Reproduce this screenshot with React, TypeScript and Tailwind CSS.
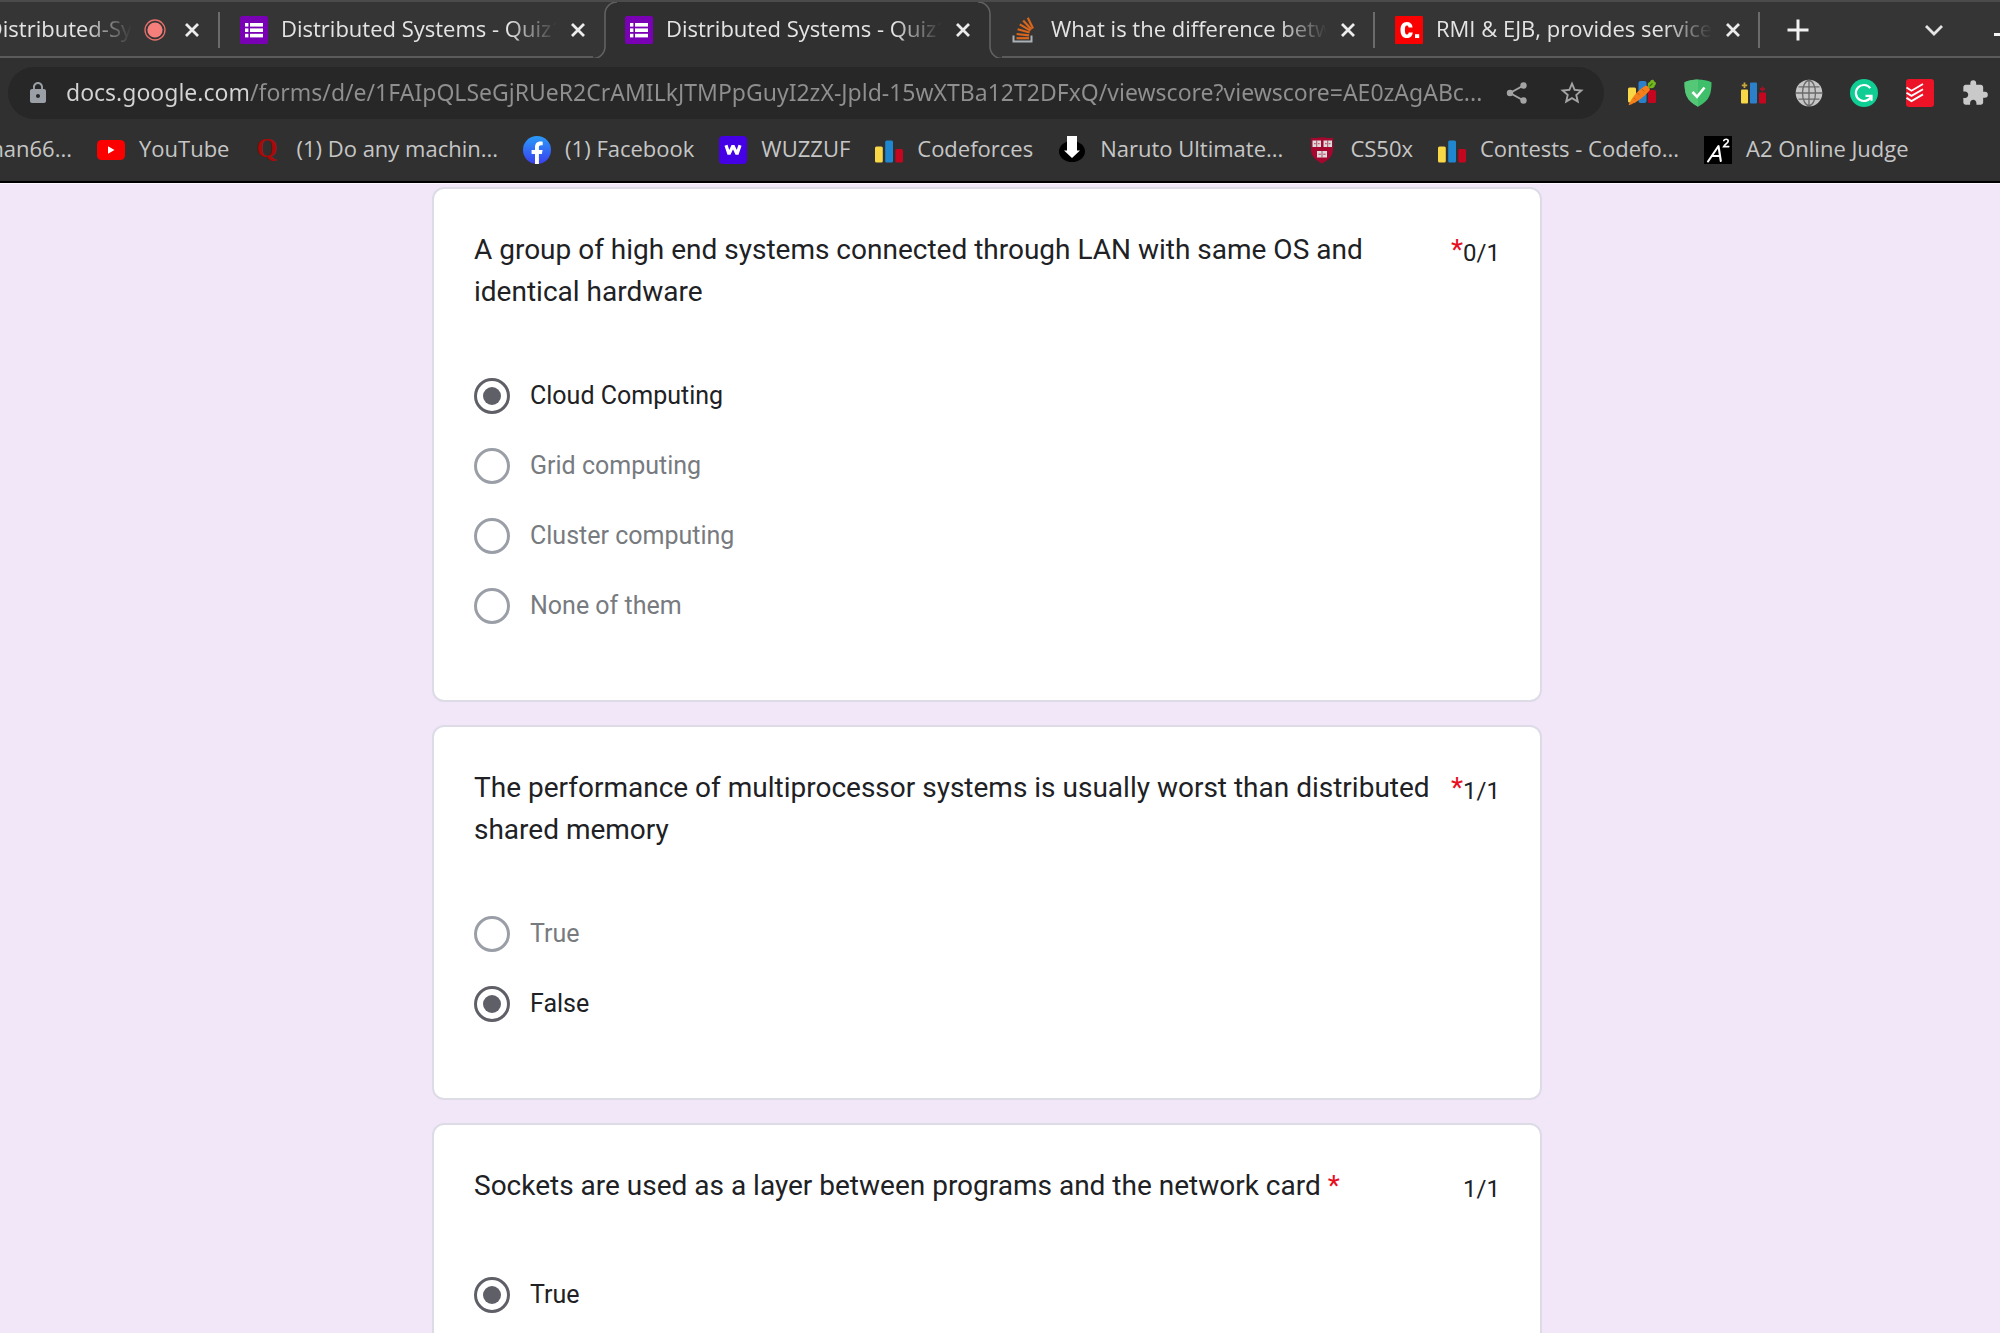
import type { ReactNode } from "react";
import { MdExtension, MdLock, MdStarBorder } from "react-icons/md";

/* ---------- icons ---------- */

const FormsIcon = () => (
  <svg viewBox="0 0 28 28" className="size-7 shrink-0" aria-hidden="true">
    <rect width="28" height="28" rx="2" fill="#7900b4" />
    <g fill="#fff">
      <rect x="5" y="7" width="3.4" height="3.6" />
      <rect x="10" y="7" width="13" height="3.6" />
      <rect x="5" y="12.4" width="3.4" height="3.6" />
      <rect x="10" y="12.4" width="13" height="3.6" />
      <rect x="5" y="17.8" width="3.4" height="3.6" />
      <rect x="10" y="17.8" width="13" height="3.6" />
    </g>
  </svg>
);

const StackIcon = () => (
  <svg viewBox="0 0 28 28" className="size-7 shrink-0" aria-hidden="true" fill="none">
    <path d="M3.5 19.5v6h18v-6" stroke="#a9b1b6" strokeWidth="2" />
    <g stroke="#d9661c" strokeWidth="2.2">
      <path d="M6.5 22.2h12.5" />
      <path d="M6.6 18l12.4 1.3" />
      <path d="M7.6 13.2l12 3.3" />
      <path d="M9.8 8.4l10.7 6.2" />
      <path d="M13.2 4.6l8.3 9" />
      <path d="M17.8 1.8l5.2 10.6" />
    </g>
  </svg>
);

const CourseIcon = () => (
  <svg viewBox="0 0 28 28" className="size-7 shrink-0" aria-hidden="true">
    <rect width="28" height="28" rx="1" fill="#fb0000" />
    <path d="M17.6 11.4h-4c-.2-1.4-.8-2-1.7-2-1.4 0-2 1.2-2 4.5s.6 4.6 2 4.6c1 0 1.6-.7 1.8-2.1h4c-.3 3.6-2.5 5.6-5.9 5.6-4.1 0-6.3-2.9-6.3-8.1s2.3-8 6.3-8c3.4 0 5.5 1.9 5.8 5.5z" fill="#fff" />
    <rect x="20" y="18.2" width="4.2" height="3.8" fill="#fff" />
  </svg>
);

const RecordingIcon = () => (
  <svg viewBox="0 0 22 22" className="size-[22px] shrink-0" role="img" aria-label="Recording">
    <circle cx="11" cy="11" r="10" fill="none" stroke="#e8706c" strokeWidth="1.3" />
    <circle cx="11" cy="11" r="7.6" fill="#f67f7b" />
  </svg>
);

const YouTubeIcon = () => (
  <svg viewBox="0 0 28 28" className="size-7 shrink-0" aria-hidden="true">
    <rect y="4" width="28" height="20" rx="4.5" fill="#fc0000" />
    <path d="M11 10.3v7.4l6.5-3.700z" fill="#fff" />
  </svg>
);

const QuoraIcon = () => (
  <svg viewBox="0 0 28 28" className="size-7 shrink-0" aria-hidden="true">
    <text x="13" y="21" textAnchor="middle" fontFamily="Liberation Serif, serif" fontWeight="700" fontSize="27" fill="#a80a0a">
      Q
    </text>
  </svg>
);

const FacebookIcon = () => (
  <svg viewBox="0 0 28 28" className="size-7 shrink-0" aria-hidden="true">
    <defs>
      <linearGradient id="fb" x1="0" y1="0" x2="0" y2="1">
        <stop offset="0" stopColor="#2a9bf8" />
        <stop offset="1" stopColor="#3a3ff0" />
      </linearGradient>
    </defs>
    <circle cx="14" cy="14" r="14" fill="url(#fb)" />
    <path d="M12 27.9V18H8.6v-4H12v-2.5c0-4 2-6 5.4-6 .9 0 1.7.1 2.3.2v3.5h-1.5c-1.8 0-2.3.8-2.3 2.2V14h3.7l-.7 4h-3v9.9a14 14 0 0 1-3.9 0z" fill="#fff" />
  </svg>
);

const WuzzufIcon = () => (
  <svg viewBox="0 0 28 28" className="size-7 shrink-0" aria-hidden="true">
    <rect width="28" height="28" rx="4" fill="#4500e5" />
    <path d="M7 9.2l3 9 4-8.6 4 8.6 3-9" fill="none" stroke="#fff" strokeWidth="3.2" strokeLinejoin="bevel" />
  </svg>
);

const CodeforcesIcon = () => (
  <svg viewBox="0 0 28 28" className="size-7 shrink-0" aria-hidden="true">
    <rect x="0" y="10.5" width="7.8" height="16" rx="1.5" fill="#f8d847" />
    <rect x="10.200" y="4.500" width="7.800" height="22" rx="1.5" fill="#1f87d0" />
    <rect x="20.400" y="13" width="7.600" height="13.500" rx="1.5" fill="#c4071f" />
  </svg>
);

const DownloadIcon = () => (
  <svg viewBox="0 0 28 28" className="size-7 shrink-0" aria-hidden="true">
    <ellipse cx="14" cy="15.5" rx="13" ry="10.5" fill="#000" />
    <path d="M9 0h10v14.5h3L14 22l-8-7.500h3z" fill="#fff" />
  </svg>
);

const HarvardIcon = () => (
  <svg viewBox="0 0 28 28" className="size-7 shrink-0" aria-hidden="true">
    <path d="M3 1.5c3 1 6 .6 11-.2 5 .8 8 1.200 11 .2v12C25 20 20.500 24 14 27.500 7.500 24 3 20 3 13.500z" fill="#a5072f" />
    <path d="M4.500 4.500h8.500v6.500H4.500zM15.500 4.500H24v6.500h-8.500zM9 15h10v6.500H9z" fill="#dcdcdc" />
    <path
      d="M8.700 4.500V11M19.700 4.500V11M14 15v6.500M6 7.700h1.800M9.800 7.700h1.800M17 7.700h1.800M20.700 7.700h1.800M10.500 18.200h2.400M15.200 18.200h2.400"
      stroke="#a5072f"
      strokeWidth=".7"
    />
  </svg>
);

const A2Icon = () => (
  <svg viewBox="0 0 28 28" className="size-7 shrink-0" aria-hidden="true" fill="none" stroke="#fff" strokeLinecap="round">
    <rect width="28" height="28" fill="#000" stroke="none" />
    <path d="M4 25.5L14.5 10l2.3 15M8 20h8" strokeWidth="2.1" strokeLinejoin="round" />
    <path d="M19.8 4.5c.6-1.6 4.3-1.9 4.4.4 0 1.9-3 3.3-4.5 5.7h5" strokeWidth="1.7" />
  </svg>
);

const CarrotIcon = () => (
  <svg viewBox="0 0 28 28" className="size-7 shrink-0" aria-hidden="true">
    <rect x="0" y="8.5" width="8" height="15" rx="1.5" fill="#f8d847" />
    <rect x="10.500" y="2" width="8" height="22" rx="2" fill="#2b80c9" />
    <rect x="20" y="11" width="8" height="13" rx="1.5" fill="#c4071f" />
    <path d="M.5 26.300C2 21.500 9 11.500 17 7c2.200-.7 5 1.600 4.800 4C17 17.500 7 24.500.5 26.300z" fill="#f5801b" />
    <path d="M9.500 14l2 2.200M14 10l2.200 2.400M6 19l1.500 1.500" stroke="#c95f0c" strokeWidth="1" />
    <path d="M20.500 8.500C19 5.500 20 3 22 3c.5-2.500 4-3 4.200-.4 2.300.4 2 3.400.4 4 .6 2.400-3.200 3.600-6.100 1.900z" fill="#74b81f" />
    <path d="M21.500 7.300l3-3" stroke="#3c6f10" strokeWidth="1.2" />
  </svg>
);

const ShieldIcon = () => (
  <svg viewBox="0 0 28 28" className="size-7 shrink-0" aria-hidden="true">
    <path d="M14 .5c5 0 9.500 1 13.500 2.800 0 11-1.500 18.200-13.500 24.500C2 21.500.5 14.300.5 3.300 4.500 1.500 9 .5 14 .5z" fill="#3fbf6a" />
    <path d="M14 .5C9 .5 4.500 1.500.5 3.300.5 14.300 2 21.500 14 27.800z" fill="#55c878" />
    <path d="M8.500 13l4.500 4.800 7.500-9.300" fill="none" stroke="#fff" strokeWidth="2.6" />
  </svg>
);

const BarsPlusIcon = () => (
  <svg viewBox="0 0 28 28" className="size-7 shrink-0" aria-hidden="true">
    <rect x="2" y="10.5" width="7" height="14" rx="1" fill="#f8d847" />
    <rect x="11" y="3.5" width="7" height="21" rx="1" fill="#2b80c9" />
    <rect x="20" y="13.5" width="7" height="11" rx="1" fill="#c4071f" />
    <path d="M5.500 3.500v5.500M2.800 6.300h5.400" stroke="#c9a93a" strokeWidth="1.8" />
    <path d="M23.500 7.500v5M21 10h5" stroke="#a01226" strokeWidth="1.8" />
  </svg>
);

const GlobeIcon = () => (
  <svg viewBox="0 0 28 28" className="size-7 shrink-0" aria-hidden="true">
    <circle cx="14" cy="14" r="13.3" fill="#c6c6c6" />
    <g fill="none" stroke="#6a6a6a" strokeWidth="1.3">
      <ellipse cx="14" cy="14" rx="6.5" ry="12.5" />
      <path d="M14 1v26M1 14h26M3.500 7.800h21M3.500 20.200h21" />
    </g>
  </svg>
);

const GrammarlyIcon = () => (
  <svg viewBox="0 0 28 28" className="size-7 shrink-0" aria-hidden="true">
    <circle cx="14" cy="14" r="14" fill="#0fcd93" />
    <path d="M20.300 9.200A8 8 0 1 0 21.300 17" fill="none" stroke="#fff" strokeWidth="2.2" />
    <path d="M15.500 16.800h6v5" fill="none" stroke="#fff" strokeWidth="2.2" />
  </svg>
);

const TodoistIcon = () => (
  <svg viewBox="0 0 28 28" className="size-7 shrink-0" aria-hidden="true">
    <rect width="28" height="28" rx="3" fill="#ec1327" />
    <g fill="none" stroke="#fff" strokeWidth="1.9">
      <path d="M.5 8.500l5 3.200L17 5" />
      <path d="M.5 13.700l5 3.200L17 10.200" />
      <path d="M.5 18.900l5 3.200L17 15.400" />
    </g>
  </svg>
);

const ShareIcon = () => (
  <svg viewBox="0 0 24 24" className="size-6" aria-hidden="true" fill="#a4a4a4">
    <path d="M18.500 4.500L5 12l13.500 7.500" fill="none" stroke="#a4a4a4" strokeWidth="1.9" />
    <circle cx="18.500" cy="4.500" r="3.200" />
    <circle cx="5" cy="12" r="3.200" />
    <circle cx="18.500" cy="19.500" r="3.200" />
  </svg>
);

const CloseIcon = () => (
  <svg viewBox="0 0 28 28" className="size-7" aria-hidden="true">
    <path d="M8 8l12 12M20 8L8 20" stroke="#ececec" strokeWidth="2.8" />
  </svg>
);

/* ---------- tab strip ---------- */

function TabTitle({ children }: { children: ReactNode }) {
  return (
    <span className="min-w-0 flex-1 overflow-hidden pb-1 whitespace-nowrap [mask-image:linear-gradient(to_right,black_calc(100%-48px),transparent)]">
      {children}
    </span>
  );
}

const CloseButton = ({ tab }: { tab: string }) => (
  <button type="button" aria-label={`Close ${tab}`} className="size-7 shrink-0">
    <CloseIcon />
  </button>
);

function Tab({ icon, title, divider }: { icon: ReactNode; title: string; divider?: boolean }) {
  return (
    <div className="flex w-[385px] shrink-0 items-center pl-5">
      {icon}
      <div className="ml-[13px] flex min-w-0 flex-1 text-[22px]">
        <TabTitle>{title}</TabTitle>
      </div>
      <div className="mr-[11px] ml-[7px] flex">
        <CloseButton tab={title} />
      </div>
      <span className={divider ? "h-9 w-0.5 bg-[#6b6b6b]" : "w-0.5"} />
    </div>
  );
}

/* Curved side of the selected tab, lying over the strip's bottom line. */
const TabEdge = ({ className }: { className: string }) => (
  <svg viewBox="0 0 24 60" className={className} aria-hidden="true">
    <rect y="2" width="24" height="58" fill="#353535" />
    <path d="M0 58.5A12 12 0 0 0 12 46.5V14A12 12 0 0 1 24 2V60H0z" fill="#303030" />
    <path d="M0 58.5A12 12 0 0 0 12 46.5V14A12 12 0 0 1 24 2" fill="none" stroke="#626262" strokeWidth="1.6" />
  </svg>
);

function TabStrip() {
  return (
    <div className="flex h-[60px] overflow-hidden border-t-2 border-b-2 border-t-[#4b4b4b] border-b-[#303030] bg-[#353535] text-[#e4e4e4] shadow-[inset_0_-2px_0_#5b5b5b]">
      <div className="flex w-[220px] shrink-0 items-center text-[22px]">
        <div className="flex w-[132px] justify-end overflow-hidden pb-1 whitespace-nowrap [mask-image:linear-gradient(to_right,black_calc(100%-48px),transparent)]">
          Distributed-Sy
        </div>
        <div className="ml-3 flex flex-1 items-center justify-between">
          <RecordingIcon />
          <CloseButton tab="Distributed-Sy" />
          <span className="h-9 w-0.5 bg-[#6b6b6b]" />
        </div>
      </div>
      <Tab icon={<FormsIcon />} title="Distributed Systems - Quiz1" />
      <div className="relative flex shrink-0 bg-[#303030]">
        <TabEdge className="absolute -top-0.5 -left-3 h-[60px] w-6" />
        <TabEdge className="absolute -top-0.5 -right-3 h-[60px] w-6 -scale-x-100" />
        <Tab icon={<FormsIcon />} title="Distributed Systems - Quiz1" />
      </div>
      <Tab icon={<StackIcon />} title="What is the difference betw" divider />
      <Tab icon={<CourseIcon />} title="RMI & EJB, provides service" divider />
      <button type="button" aria-label="New tab" className="ml-6 w-7">
        <svg viewBox="0 0 28 28" className="size-7" aria-hidden="true">
          <path d="M14 3.500v21M3.500 14h21" stroke="#f2f2f2" strokeWidth="3" />
        </svg>
      </button>
      <button type="button" aria-label="Search tabs" className="ml-auto w-6 shrink-0">
        <svg viewBox="0 0 24 24" className="size-6" aria-hidden="true">
          <path d="M4 8l8 8 8-8" fill="none" stroke="#e4e4e4" strokeWidth="2.8" />
        </svg>
      </button>
      <button type="button" aria-label="Minimize" className="ml-12 w-[6px] shrink-0 overflow-hidden pt-2">
        <span className="block h-[3px] w-5 bg-[#f2f2f2]" />
      </button>
    </div>
  );
}

/* ---------- toolbar ---------- */

const url =
  "docs.google.com/forms/d/e/1FAIpQLSeGjRUeR2CrAMILkJTMPpGuyI2zX-Jpld-15wXTBa12T2DFxQ/viewscore?viewscore=AE0zAgABc...";

const extensions: { name: string; icon: ReactNode }[] = [
  { name: "Carrot", icon: <CarrotIcon /> },
  { name: "AdGuard", icon: <ShieldIcon /> },
  { name: "Codeforces helper", icon: <BarsPlusIcon /> },
  { name: "Globe", icon: <GlobeIcon /> },
  { name: "Grammarly", icon: <GrammarlyIcon /> },
  { name: "Todoist", icon: <TodoistIcon /> },
  { name: "Extensions", icon: <MdExtension className="size-7 text-[#c9c9c9]" /> },
];

function Toolbar() {
  return (
    <div className="flex h-[66px] items-center pr-[11px] pl-2">
      <div className="flex h-[52px] min-w-0 flex-1 items-center rounded-full bg-[#272727] pr-[18px] pl-[18px]">
        <MdLock className="size-6 shrink-0 text-[#9aa0a6]" aria-hidden="true" />
        <input
          type="text"
          aria-label="Address"
          readOnly
          value={url}
          className="ml-4 min-w-0 flex-1 bg-[linear-gradient(to_right,#d4d4d4_182px,#8f8f8f_182px)] bg-clip-text pb-0.5 font-['Noto_Sans',sans-serif] text-[23px] text-transparent outline-none"
        />
        <button type="button" aria-label="Share">
          <ShareIcon />
        </button>
        <button type="button" aria-label="Bookmark this page" className="ml-[29px]">
          <MdStarBorder className="size-7 text-[#a4a4a4]" />
        </button>
      </div>
      <div className="ml-6 flex w-[361px] shrink-0 justify-between">
        {extensions.map((e) => (
          <button key={e.name} type="button" aria-label={e.name}>
            {e.icon}
          </button>
        ))}
      </div>
    </div>
  );
}

/* ---------- bookmarks ---------- */

const bookmarks: { label: string; icon: ReactNode }[] = [
  { label: "YouTube", icon: <YouTubeIcon /> },
  { label: "(1) Do any machin...", icon: <QuoraIcon /> },
  { label: "(1) Facebook", icon: <FacebookIcon /> },
  { label: "WUZZUF", icon: <WuzzufIcon /> },
  { label: "Codeforces", icon: <CodeforcesIcon /> },
  { label: "Naruto Ultimate...", icon: <DownloadIcon /> },
  { label: "CS50x", icon: <HarvardIcon /> },
  { label: "Contests - Codefo...", icon: <CodeforcesIcon /> },
  { label: "A2 Online Judge", icon: <A2Icon /> },
];

function BookmarksBar() {
  return (
    <nav aria-label="Bookmarks" className="flex h-12 items-center gap-[25px] text-[22px] whitespace-nowrap text-[#c6c6c6]">
      <a href="#bookmark" className="flex w-[72px] justify-end overflow-hidden pb-1">
        man66...
      </a>
      {bookmarks.map((b) => (
        <a key={b.label} href="#bookmark" className="flex shrink-0 items-center gap-3.5">
          {b.icon}
          <span className="pb-1">{b.label}</span>
        </a>
      ))}
    </nav>
  );
}

/* ---------- form ---------- */

type Question = {
  id: string;
  text: string;
  score: string;
  options: string[];
  selected: string;
  inlineMark?: boolean;
};

const questions: Question[] = [
  {
    id: "q1",
    text: "A group of high end systems connected through LAN with same OS and identical hardware",
    score: "0/1",
    options: ["Cloud Computing", "Grid computing", "Cluster computing", "None of them"],
    selected: "Cloud Computing",
  },
  {
    id: "q2",
    text: "The performance of multiprocessor systems is usually worst than distributed shared memory",
    score: "1/1",
    options: ["True", "False"],
    selected: "False",
  },
  {
    id: "q3",
    text: "Sockets are used as a layer between programs and the network card",
    score: "1/1",
    options: ["True"],
    selected: "True",
    inlineMark: true,
  },
];

const Required = () => <span className="text-[#e8101f]">*</span>;

function QuestionCard({ q }: { q: Question }) {
  return (
    <section className="rounded-xl border-2 border-[#dddbe6] bg-white px-10 pt-10 pb-[59px]">
      <div className="flex min-h-[47px] items-start text-[28px] leading-[42px]">
        <h2 id={q.id} className="min-w-0 flex-1">
          {q.text}
          {q.inlineMark && (
            <>
              {" "}
              <Required />
            </>
          )}
        </h2>
        {!q.inlineMark && <Required />}
        <span className="pt-[3px] text-2xl leading-[42px]">{q.score}</span>
      </div>
      <div role="radiogroup" aria-labelledby={q.id} className="mt-12">
        {q.options.map((option) => (
          <label
            key={option}
            className="flex h-[70px] items-center gap-5 text-[25px] text-[#777b80] has-checked:text-[#202124]"
          >
            <input
              type="radio"
              name={q.id}
              readOnly
              checked={option === q.selected}
              className="grid size-9 appearance-none place-content-center rounded-full border-[3px] border-[#9a9ea6] checked:border-[#5f6067] checked:before:size-[18px] checked:before:rounded-full checked:before:bg-[#5f6067]"
            />
            {option}
          </label>
        ))}
      </div>
    </section>
  );
}

export default function App() {
  return (
    <div className="flex h-screen flex-col overflow-hidden bg-[#f2e7f8]">
      <header className="border-b-2 border-black bg-[#303030] pb-[7px] font-['Open_Sans',sans-serif]">
        <TabStrip />
        <Toolbar />
        <BookmarksBar />
      </header>
      <main className="min-h-0 flex-1 overflow-hidden border-t border-[#fbf6fd] pt-[3px] pr-[26px] font-['Roboto',sans-serif] text-[#202124]">
        <div className="mx-auto flex max-w-[1110px] flex-col gap-[23px]">
          {questions.map((q) => (
            <QuestionCard key={q.id} q={q} />
          ))}
        </div>
      </main>
    </div>
  );
}
